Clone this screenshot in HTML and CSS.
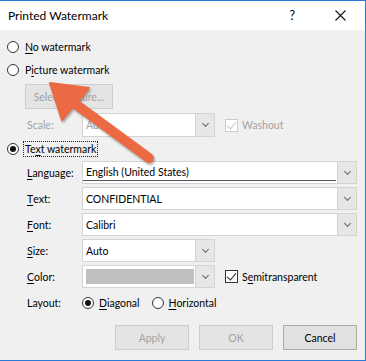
FILE: index.html
```html
<!DOCTYPE html>
<html lang="en">
<head>
  <meta charset="UTF-8" />
  <title>Printed Watermark</title>
  <link rel="stylesheet" href="styles.css">
</head>
<body>
  <div class="dialog">
    <div class="titlebar">
      <span class="title">Printed Watermark</span>
      <span class="help">?</span>
      <svg class="close" width="11" height="11" viewBox="0 0 11 11">
        <path d="M0.5 0.5 L10.5 10.5 M10.5 0.5 L0.5 10.5" stroke="#111" stroke-width="1.1" fill="none" />
      </svg>
    </div>

    <div class="content">
      <div class="option">
        <span class="radio"></span>
        <span><u>N</u>o watermark</span>
      </div>
      <div class="option opt-picture">
        <span class="radio"></span>
        <span>P<u>i</u>cture watermark</span>
      </div>

      <div class="btn btn-select disabled">Select Picture...</div>

      <div class="row-scale">
        <span class="label disabled">Scale:</span>
        <div class="combo short">
          <span class="value disabled">Auto</span>
          <span class="drop"><span class="chev"></span></span>
        </div>
        <span class="check check-off"></span>
        <span class="disabled">Washout</span>
      </div>

      <div class="option opt-text">
        <span class="radio checked"></span>
        <span class="focus">Te<u>x</u>t watermark</span>
      </div>

      <div class="form">
        <span class="label"><u>L</u>anguage:</span>
        <div class="combo">
          <span class="value underlined">English (United States)</span>
          <span class="drop"><span class="chev"></span></span>
        </div>

        <span class="label"><u>T</u>ext:</span>
        <div class="combo">
          <span class="value">CONFIDENTIAL</span>
          <span class="drop"><span class="chev"></span></span>
        </div>

        <span class="label"><u>F</u>ont:</span>
        <div class="combo">
          <span class="value">Calibri</span>
          <span class="drop"><span class="chev"></span></span>
        </div>

        <span class="label"><u>S</u>ize:</span>
        <div class="combo short">
          <span class="value">Auto</span>
          <span class="drop"><span class="chev"></span></span>
        </div>

        <span class="label"><u>C</u>olor:</span>
        <div class="color-line">
          <div class="combo short">
            <span class="value"><span class="swatch"></span></span>
            <span class="drop"><span class="chev"></span></span>
          </div>
          <span class="check check-on"></span>
          <span>S<u>e</u>mitransparent</span>
        </div>
      </div>

      <div class="row-layout">
        <span class="label">Layout:</span>
        <span class="radio checked"></span>
        <span class="radio-text"><u>D</u>iagonal</span>
        <span class="radio radio-h"></span>
        <span class="radio-text"><u>H</u>orizontal</span>
      </div>

      <div class="buttons">
        <div class="btn disabled">Apply</div>
        <div class="btn disabled">OK</div>
        <div class="btn">Cancel</div>
      </div>
    </div>

    <!-- callout arrow drawn over the dialog -->
    <svg class="arrow" width="366" height="361" viewBox="0 0 366 361">
      <line x1="149" y1="158" x2="74" y2="103" stroke="#ec6a43" stroke-width="10" stroke-linecap="round" />
      <polygon points="50,83 89,88 62,120" fill="#ec6a43" stroke="#ec6a43" stroke-width="2" stroke-linejoin="round" />
    </svg>
  </div>
</body>
</html>
```

FILE: styles.css
```css
body {
  margin: 0;
  font-family: Lato, "Noto Sans", sans-serif;
  font-size: 10.5px;
  color: #000;
  background: #fff;
}
u {
  text-decoration-thickness: 1px;
  text-underline-offset: 2px;
}
.dialog {
  position: relative;
  box-sizing: border-box;
  width: 366px;
  height: 361px;
  background: #f0f0f0;
  border-top: 1px solid #2b7bd6;
  border-right: 1px solid #2b7bd6;
  border-bottom: 1px solid #2b7bd6;
}
.titlebar {
  height: 29px;
  background: #fff;
  display: flex;
  align-items: center;
  padding-left: 8px;
  font-size: 12px;
}
.help {
  margin-left: auto;
  font-size: 12.5px;
}
.close {
  margin: 0 19px 0 40px;
}
.content {
  display: flex;
  flex-direction: column;
  padding: 9px 8px 0 7px;
}
.option {
  display: flex;
  align-items: center;
  gap: 6px;
  height: 16px;
}
.opt-picture {
  margin-top: 7px;
}
.opt-text {
  margin-top: 4px;
  gap: 4px;
}
.radio {
  box-sizing: border-box;
  width: 12px;
  height: 12px;
  border: 1px solid #333;
  border-radius: 50%;
  background: #fff;
  display: flex;
  align-items: center;
  justify-content: center;
}
.radio.checked::after {
  content: "";
  width: 6px;
  height: 6px;
  border-radius: 50%;
  background: #111;
}
.focus {
  border: 1px dotted #222;
  padding: 0 1px;
  line-height: 14px;
}
.disabled {
  color: #a2a2a2;
}
.btn {
  box-sizing: border-box;
  width: 74px;
  height: 25px;
  background: #e1e1e1;
  border: 1px solid #adadad;
  display: flex;
  align-items: center;
  justify-content: center;
}
.btn.disabled {
  background: #e4e4e4;
  border-color: #cdcdcd;
}
.btn-select {
  width: 88px;
  height: 25px;
  margin: 6px 0 0 18px;
}
.row-scale {
  display: flex;
  align-items: center;
  margin-top: 4px;
  padding-left: 20px;
  height: 24px;
}
.label {
  width: 55px;
  display: flex;
  align-items: center;
}
.combo {
  box-sizing: border-box;
  height: 23px;
  display: flex;
  background: #fff;
  border: 1px solid #d4d4d4;
}
.row-scale .combo {
  height: 24px;
}
.combo.short {
  width: 133px;
}
.value {
  flex: 1;
  display: flex;
  align-items: center;
  padding-left: 3px;
  min-width: 0;
}
.value.underlined {
  box-shadow: inset 0 -1px 0 #555;
  margin-bottom: 2px;
}
.drop {
  width: 18px;
  margin-left: 1px;
  background: #e6e6e6;
  border-left: 1px solid #d4d4d4;
  display: flex;
  align-items: center;
  justify-content: center;
}
.chev {
  width: 4px;
  height: 4px;
  border-right: 1px solid #666;
  border-bottom: 1px solid #666;
  transform: rotate(45deg);
  margin-top: -3px;
}
.swatch {
  width: 108px;
  height: 15px;
  background: #bfbfbf;
}
.check {
  box-sizing: border-box;
  width: 13px;
  height: 13px;
  margin: 0 4px 0 10px;
  background: #fff;
  border: 1px solid #333;
  position: relative;
}
.check::after {
  content: "";
  position: absolute;
  left: 3px;
  top: 0px;
  width: 4px;
  height: 8px;
  border-right: 1px solid #222;
  border-bottom: 1px solid #222;
  transform: rotate(40deg);
}
.check-off {
  border-color: #cccccc;
}
.check-off::after {
  border-color: #c4c4c4;
}
.form {
  display: grid;
  grid-template-columns: 55px 1fr;
  row-gap: 3px;
  margin-top: 4px;
  padding-left: 20px;
}
.color-line {
  display: flex;
  align-items: center;
}
.row-layout {
  display: flex;
  align-items: center;
  height: 16px;
  margin-top: 7px;
  padding-left: 20px;
}
.radio-text {
  margin-left: 5px;
}
.radio-h {
  margin-left: 12px;
}
.buttons {
  display: flex;
  justify-content: flex-end;
  gap: 10px;
  margin-top: 14px;
}
.arrow {
  position: absolute;
  left: 0;
  top: -1px;
  pointer-events: none;
  filter: drop-shadow(1px 2px 1px rgba(0, 0, 0, 0.3));
}
```
